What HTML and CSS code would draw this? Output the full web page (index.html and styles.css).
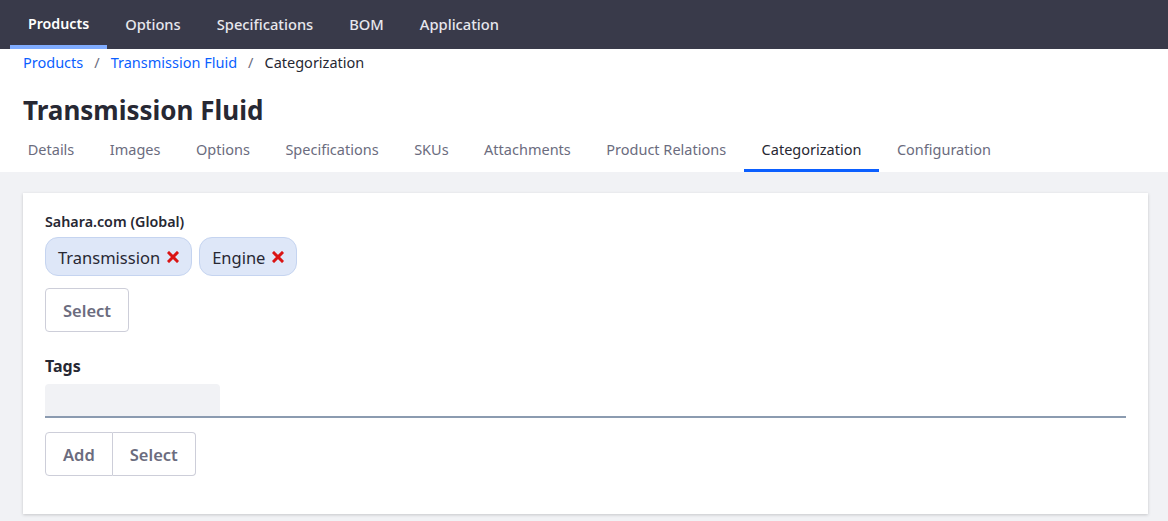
FILE: index.html
```html
<!DOCTYPE html>
<html lang="en">
<head>
<meta charset="utf-8">
<title>Transmission Fluid - Categorization</title>
<link rel="stylesheet" href="styles.css">
</head>
<body>
<header class="topnav">
  <a class="topnav-item active">Products</a>
  <a class="topnav-item">Options</a>
  <a class="topnav-item">Specifications</a>
  <a class="topnav-item">BOM</a>
  <a class="topnav-item">Application</a>
</header>
<div class="page-head">
  <nav class="breadcrumb">
    <a class="crumb-link">Products</a>
    <span class="crumb-sep">/</span>
    <a class="crumb-link">Transmission Fluid</a>
    <span class="crumb-sep">/</span>
    <span class="crumb-current">Categorization</span>
  </nav>
  <h1 class="title">Transmission Fluid</h1>
  <nav class="tabs">
    <a class="tab">Details</a>
    <a class="tab">Images</a>
    <a class="tab">Options</a>
    <a class="tab">Specifications</a>
    <a class="tab">SKUs</a>
    <a class="tab">Attachments</a>
    <a class="tab">Product Relations</a>
    <a class="tab active">Categorization</a>
    <a class="tab">Configuration</a>
  </nav>
</div>
<main class="content">
  <section class="card">
    <div class="field-label small">Sahara.com (Global)</div>
    <div class="chips">
      <span class="chip">Transmission
        <svg class="x-icon" viewBox="0 0 12 12" width="12" height="12"><path d="M2 2 L10 10 M10 2 L2 10" stroke="#da1414" stroke-width="3" stroke-linecap="square"/></svg>
      </span>
      <span class="chip">Engine
        <svg class="x-icon" viewBox="0 0 12 12" width="12" height="12"><path d="M2 2 L10 10 M10 2 L2 10" stroke="#da1414" stroke-width="3" stroke-linecap="square"/></svg>
      </span>
    </div>
    <button class="btn">Select</button>
    <div class="field-label tags-label">Tags</div>
    <div class="tag-input-row">
      <div class="tag-input"></div>
    </div>
    <div class="btn-group">
      <button class="btn grp-first">Add</button>
      <button class="btn grp-last">Select</button>
    </div>
  </section>
</main>
</body>
</html>
```
FILE: styles.css
```css
* { box-sizing: border-box; }
html, body { margin: 0; padding: 0; }
body {
  font-family: "Noto Sans", "Open Sans", sans-serif;
  background: #f1f2f5;
  color: #272833;
  width: 1168px;
  height: 521px;
  overflow: hidden;
}
a { text-decoration: none; cursor: pointer; }

.topnav {
  height: 49px;
  background: #393a4a;
  display: flex;
  padding-left: 10px;
}
.topnav-item {
  display: flex;
  align-items: center;
  padding: 2px 18px 0;
  color: #e7e7ed;
  font-size: 14.7px;
  font-weight: 500;
  border-bottom: 4px solid transparent;
}
.topnav-item.active {
  color: #ffffff;
  font-weight: 600;
  font-size: 14.2px;
  border-bottom-color: #80acff;
}

.page-head {
  background: #fff;
  padding: 0 23px;
}
.breadcrumb {
  height: 26px;
  display: flex;
  align-items: center;
  font-size: 14.5px;
}
.crumb-link { color: #0b5fff; }
.crumb-sep { color: #6b6c7e; margin: 0 11px; }
.crumb-current { color: #272833; }
.title {
  margin: 0;
  padding-top: 17px;
  height: 59px;
  font-size: 26px;
  font-weight: 700;
  line-height: 36px;
  color: #272833;
}
.tabs {
  display: flex;
  margin-left: -13px;
  height: 38px;
}
.tab {
  display: flex;
  align-items: center;
  padding: 0 17.75px 6px;
  color: #6b6c7e;
  font-size: 14.5px;
  border-bottom: 2px solid transparent;
}
.tab.active {
  color: #272833;
  border-bottom: 3px solid #0b5fff;
  padding-bottom: 5px;
}

.content {
  padding: 21px 20px 0 23px;
}
.card {
  background: #fff;
  box-shadow: 0 1px 3px rgba(0,0,0,0.18);
  padding: 19px 22px 38px 22px;
  height: 321px;
}
.field-label {
  font-weight: 700;
  color: #272833;
}
.field-label.small { font-size: 14.3px; font-weight: 600; line-height: 20px; }
.chips {
  display: flex;
  gap: 7px;
  margin-top: 5px;
}
.chip {
  display: inline-flex;
  align-items: center;
  height: 39px;
  padding: 2px 12px 0;
  background: #dee7f8;
  border: 1px solid #c5d4f0;
  border-radius: 13px;
  font-size: 16.5px;
  color: #272833;
  gap: 7px;
}
.x-icon { flex: none; margin-top: -1px; }
.btn {
  font-family: inherit;
  height: 44px;
  background: #fff;
  border: 1px solid #cdced9;
  border-radius: 4px;
  padding: 0 17px;
  font-size: 16.5px;
  font-weight: 600;
  color: #6b6c7e;
  margin-top: 12px;
}
.tags-label {
  font-size: 16px;
  margin-top: 23px;
  line-height: 22px;
}
.tag-input-row {
  margin-top: 7px;
  border-bottom: 2px solid #8b9bb0;
}
.tag-input {
  width: 175px;
  height: 32px;
  background: #f1f2f5;
  border-radius: 4px 4px 0 0;
}
.btn-group {
  display: flex;
  margin-top: 14px;
}
.btn-group .btn { margin-top: 0; }
.grp-first { border-radius: 4px 0 0 4px; }
.grp-last { border-radius: 0 4px 4px 0; border-left: 0; }
```
